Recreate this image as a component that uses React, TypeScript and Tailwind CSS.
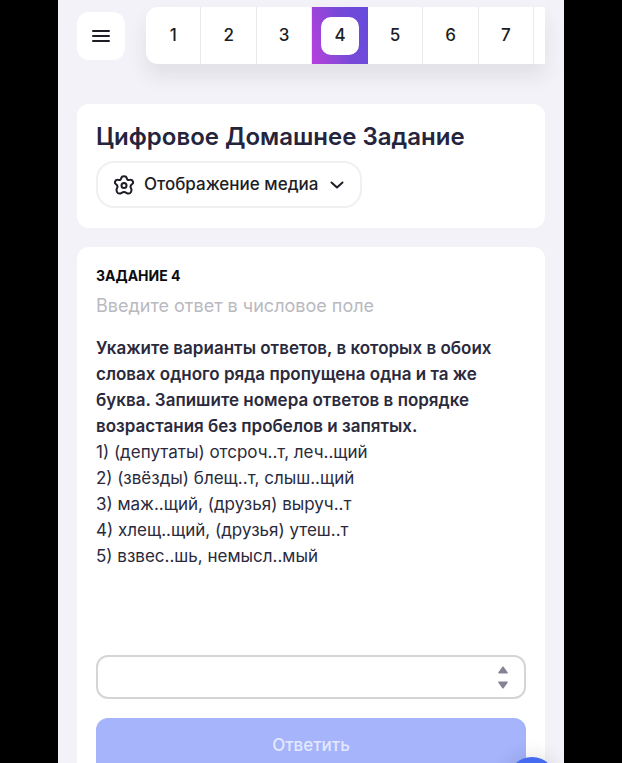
import { useState } from "react";

const tasks = [1, 2, 3, 4, 5, 6, 7];

const answers = [
  "1) (депутаты) отсроч..т, леч..щий",
  "2) (звёзды) блещ..т, слыш..щий",
  "3) маж..щий, (друзья) выруч..т",
  "4) хлещ..щий, (друзья) утеш..т",
  "5) взвес..шь, немысл..мый",
];

const MenuIcon = () => (
  <svg width="18" height="14" viewBox="0 0 18 14" stroke="currentColor" strokeWidth="2" strokeLinecap="round" aria-hidden="true">
    <path d="M1 2H17M1 7H17M1 12H17" />
  </svg>
);

const GearIcon = () => (
  <svg width="20" height="20" viewBox="0 0 20 20" fill="none" stroke="currentColor" strokeWidth="2" strokeLinejoin="round" aria-hidden="true">
    <path d="M7.4 2.8C7.8 .6 12.2 .6 12.6 2.8C13 4.8 14 5.4 16 4.9C18.6 4.3 20 7.7 18.2 9C16.4 10.3 16 11.4 16.9 13C18.4 15.6 16.6 18.8 14.4 18.6C12.6 18.4 12 17 10 17C8 17 7.4 18.4 5.6 18.6C3.4 18.8 1.6 15.6 3.1 13C4 11.4 3.6 10.3 1.8 9C0 7.7 1.4 4.3 4 4.9C6 5.4 7 4.8 7.4 2.8Z" />
    <circle cx="10" cy="10.4" r="2.5" />
  </svg>
);

const ChevronIcon = () => (
  <svg width="14" height="8" viewBox="0 0 14 8" fill="none" stroke="currentColor" strokeWidth="2" strokeLinecap="round" strokeLinejoin="round" aria-hidden="true">
    <path d="M1.5 1.5L7 6.5L12.5 1.5" />
  </svg>
);

const Header = ({ current, onSelect }: { current: number; onSelect: (task: number) => void }) => (
  <header className="flex items-center gap-[21px]">
    <button type="button" aria-label="Меню" className="flex size-12 shrink-0 items-center justify-center rounded-xl bg-white">
      <MenuIcon />
    </button>
    <nav className="flex h-[57px] min-w-0 flex-1 overflow-hidden rounded-l-xl bg-white shadow-[0_12px_20px_rgba(40,40,60,0.09)]">
      {tasks.map((task) =>
        task === current ? (
          <button
            key={task}
            type="button"
            aria-current="step"
            className="flex shrink-0 basis-[13.9%] items-center justify-center bg-linear-75 from-[#b63fdc] via-[#7849d8] via-55% to-[#644bdc]"
          >
            <span className="flex size-[38px] items-center justify-center rounded-[10px] bg-white">{task}</span>
          </button>
        ) : (
          <button
            key={task}
            type="button"
            onClick={() => onSelect(task)}
            className="shrink-0 basis-[13.9%] border-r border-[#e9e9ee]"
          >
            {task}
          </button>
        )
      )}
    </nav>
  </header>
);

const NumberField = () => {
  const [value, setValue] = useState("");
  const step = (delta: number) => setValue(String(Number(value) + delta));

  return (
    <div className="flex h-11 items-center rounded-xl border-2 border-[#d5d5d8] pr-4">
      <input
        type="number"
        aria-label="Ответ"
        value={value}
        onChange={(e) => setValue(e.target.value)}
        className="h-full min-w-0 flex-1 bg-transparent px-4 outline-none [appearance:textfield]"
      />
      <div className="flex flex-col gap-[7px] text-[#858394]">
        <button type="button" aria-label="Больше" onClick={() => step(1)}>
          <svg width="10" height="8" viewBox="0 0 10 8" fill="currentColor" stroke="currentColor" strokeWidth="1.5" strokeLinejoin="round">
            <path d="M5 1.2L9 6.8H1Z" />
          </svg>
        </button>
        <button type="button" aria-label="Меньше" onClick={() => step(-1)}>
          <svg width="10" height="8" viewBox="0 0 10 8" fill="currentColor" stroke="currentColor" strokeWidth="1.5" strokeLinejoin="round">
            <path d="M5 6.8L1 1.2H9Z" />
          </svg>
        </button>
      </div>
    </div>
  );
};

const App = () => {
  const [current, setCurrent] = useState(4);

  return (
    <div className="h-screen overflow-hidden bg-black px-[58px] font-[Inter,sans-serif] text-[17px] text-[#1d1d26]">
      <div className="relative h-full overflow-hidden bg-[#f3f2f8] px-[19px] pt-[7px] font-medium">
        <Header current={current} onSelect={setCurrent} />

        {/* Title card */}
        <section className="mt-10 rounded-xl bg-white px-[19px] pt-4 pb-5">
          <h1 className="text-[24px] leading-[34px] font-semibold text-[#25243d]">Цифровое Домашнее Задание</h1>
          <button type="button" className="mt-[7px] flex h-[47px] items-center rounded-[18px] border-2 border-[#f0f0f3] px-4">
            <GearIcon />
            <span className="mr-3 ml-2.5">Отображение медиа</span>
            <ChevronIcon />
          </button>
        </section>

        {/* Task card */}
        <main className="mt-[19px] rounded-t-xl bg-white px-[19px] pt-[17px] pb-10">
          <h2 className="text-[14px] leading-6 font-bold text-[#0b0b10]">ЗАДАНИЕ {current}</h2>
          <p className="mt-[5px] text-[18px] leading-[26px] font-normal text-[#b9b9c0]">Введите ответ в числовое поле</p>
          <div className="mt-4 leading-[26px] text-[#2b2a3d]">
            <p className="font-semibold">
              Укажите варианты ответов, в которых в обоих словах одного ряда пропущена одна и та же буква. Запишите
              номера ответов в порядке возрастания без пробелов и запятых.
            </p>
            {answers.map((answer) => (
              <p key={answer} className="font-normal">
                {answer}
              </p>
            ))}
          </div>
          <form className="mt-[86px]" onSubmit={(e) => e.preventDefault()}>
            <NumberField />
            <button type="submit" className="mt-[19px] h-14 w-full rounded-xl bg-[#a5b4fb] text-[#e4e9ff]">
              Ответить
            </button>
          </form>
        </main>

        {/* Chat bubble */}
        <button
          type="button"
          aria-label="Чат"
          className="absolute right-2 -bottom-[42px] size-12 rounded-full bg-[#456bf0] shadow-[0_0_20px_rgba(0,0,0,0.15)]"
        />
      </div>
    </div>
  );
};

export default App;
